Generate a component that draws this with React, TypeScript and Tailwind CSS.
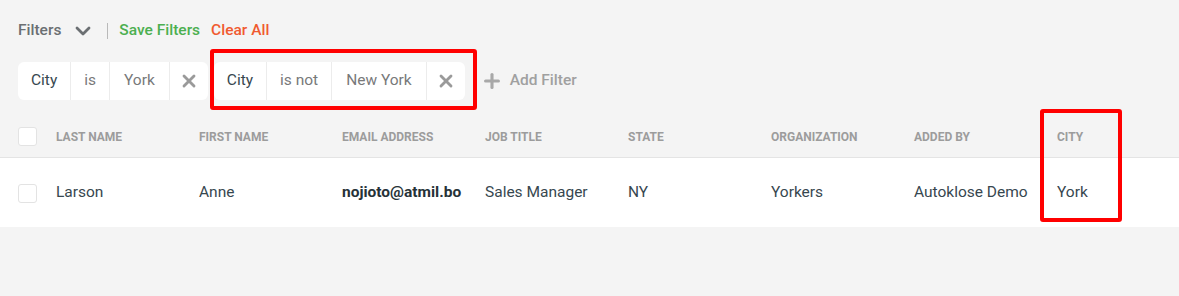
import { ChevronDown, X, Plus } from 'lucide-react';

type Row = { last: string; first: string; email: string; job: string; state: string; org: string; addedBy: string; city: string };

const columns = ['Last Name', 'First Name', 'Email Address', 'Job Title', 'State', 'Organization', 'Added By', 'City'];

const rows: Row[] = [
    { last: 'Larson', first: 'Anne', email: 'nojioto@atmil.bo', job: 'Sales Manager', state: 'NY', org: 'Yorkers', addedBy: 'Autoklose Demo', city: 'York' },
];

function FilterChip({ field, op, value }: { field: string; op: string; value: string }) {
    return (
        <div className="flex h-[38px] items-stretch rounded-md bg-white text-[15.5px]">
            <span className="flex items-center px-[13px] text-[#37474f]">{field}</span>
            <span className="flex items-center border-l border-[#ececec] px-[13px] text-[#78797a]">{op}</span>
            <span className="flex items-center border-l border-[#ececec] px-[14px] text-[#78797a]">{value}</span>
            <span className="flex w-[39px] items-center justify-center border-l border-[#ececec] text-[#9a9a9a]">
                <X size={20} strokeWidth={3.4} />
            </span>
        </div>
    );
}

function Checkbox() {
    return <div className="h-[19px] w-[19px] rounded-[3px] border border-[#e3e3e3] bg-white" />;
}

export default function App() {
    return (
        <div className="relative h-[296px] w-[1179px] overflow-hidden bg-[#f4f4f4] font-['Roboto',sans-serif]">
            {/* Toolbar */}
            <div className="flex h-[60px] items-center pl-[18px] pt-[1px] text-[15.5px] font-medium">
                <span className="text-[#6b6f72]">Filters</span>
                <ChevronDown size={24} strokeWidth={2.8} className="ml-[10px] text-[#6b6f72]" />
                <span className="ml-[12px] h-[16px] w-px bg-[#b9b9b9]" />
                <span className="ml-[11px] text-[#4caf50]">Save Filters</span>
                <span className="ml-[11px] text-[#f05a30]">Clear All</span>
            </div>

            {/* Active filters */}
            <div className="flex h-[40px] items-center gap-[6px] pl-[18px] pt-[2px]">
                <FilterChip field="City" op="is" value="York" />
                <FilterChip field="City" op="is not" value="New York" />
                <div className="ml-[10px] flex items-center text-[15.5px] font-medium text-[#a0a0a0]">
                    <Plus size={22} strokeWidth={3.4} className="text-[#a8a8a8]" />
                    <span className="ml-[7px]">Add Filter</span>
                </div>
            </div>

            {/* Table */}
            <div className="mt-[15px]">
                <div className="flex h-[43px] items-center border-b border-[#e4e4e4] pl-[18px] pt-px">
                    <div className="w-[38px] shrink-0">
                        <Checkbox />
                    </div>
                    {columns.map((c) => (
                        <div key={c} className="w-[143px] shrink-0 text-[12px] font-bold uppercase text-[#9c9c9c]">
                            {c}
                        </div>
                    ))}
                </div>
                {rows.map((r) => (
                    <div key={r.email} className="flex h-[69px] items-center bg-white pl-[18px] pt-px text-[15.5px] text-[#37474f]">
                        <div className="w-[38px] shrink-0">
                            <Checkbox />
                        </div>
                        <div className="w-[143px] shrink-0">{r.last}</div>
                        <div className="w-[143px] shrink-0">{r.first}</div>
                        <div className="w-[143px] shrink-0 font-bold text-[#263238]">{r.email}</div>
                        <div className="w-[143px] shrink-0">{r.job}</div>
                        <div className="w-[143px] shrink-0">{r.state}</div>
                        <div className="w-[143px] shrink-0">{r.org}</div>
                        <div className="w-[143px] shrink-0">{r.addedBy}</div>
                        <div className="w-[143px] shrink-0">{r.city}</div>
                    </div>
                ))}
            </div>

            {/* Highlight annotations */}
            <div className="pointer-events-none absolute left-[210px] top-[49px] h-[61px] w-[267px] rounded-[3px] border-[4px] border-[#ff0000]" />
            <div className="pointer-events-none absolute left-[1040px] top-[109px] h-[113px] w-[82px] rounded-[3px] border-[4px] border-[#ff0000]" />
        </div>
    );
}
